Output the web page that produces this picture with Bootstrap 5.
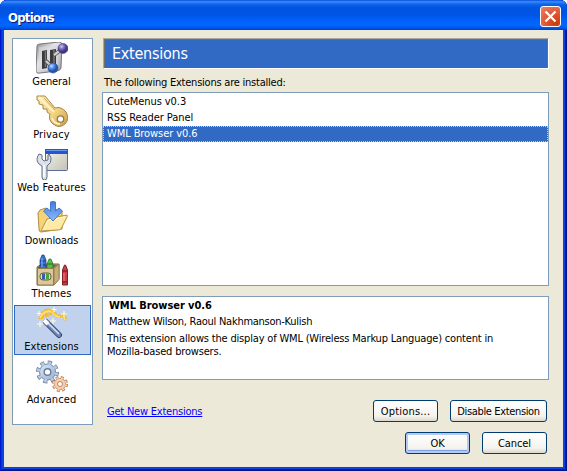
<!DOCTYPE html>
<html lang="en">
<head>
<meta charset="utf-8">
<meta name="viewport" content="width=device-width, initial-scale=1">
<title>Options</title>
<link href="https://cdn.jsdelivr.net/npm/bootstrap@5.3.0/dist/css/bootstrap.min.css" rel="stylesheet">
<style>
html, body { height: 471px; overflow: hidden; background: #fff; }
body { font-family: "DejaVu Sans Condensed", "DejaVu Sans", "Noto Sans", sans-serif; font-stretch: condensed; font-size: 11px; line-height: 13px; color: #000; letter-spacing: -.18px; }
.xp-window { width: 567px; height: 471px; border-radius: 7px 7px 0 0; padding: 0 4px 4px; background: #0a44e0; box-shadow: inset 1px 0 #0019cf, inset -1px 0 #00138c, inset 0 -1px #00138c, inset 2px 0 #0831d9, inset -2px 0 #001ea0, inset 0 -2px #001ea0; overflow: hidden; }
.xp-title { height: 30px; margin: 0 -4px; padding: 4px 6px 0 8px; background: linear-gradient(180deg, #0a4ddb 0, #3c8cf8 6%, #1068ec 13%, #0054e2 24%, #0055e6 50%, #0060fb 68%, #0067ff 84%, #005bf0 91%, #0040c8 100%); }
.xp-caption { color: #fff; font: bold 13px/17px "DejaVu Sans Condensed", "DejaVu Sans", sans-serif; font-stretch: condensed; letter-spacing: -.75px; text-shadow: 1px 1px #0a1883; margin-top: 5px; }
.xp-close { width: 21px; height: 21px; margin-top: 2px; border: 1px solid #fff; border-radius: 3px; background: radial-gradient(circle at 80% 85%, #cc3a0a 0, #e0512c 40%, #e9795f 90%); }
.xp-client { height: 437px; background: #ece9d8; padding: 8px 14px 0 8px; }
.xp-box { background: #fff; border: 1px solid #7f9db9; }
.xp-side { width: 81px; height: 387px; padding: 1px; }
.xp-item { height: 50px; margin-bottom: 3px; border: 1px solid transparent; padding: 1px 2px 0 0; white-space: nowrap; letter-spacing: -.1px; }
.xp-item svg { width: 32px; height: 32px; display: block; flex: none; margin-bottom: 1px; }
.xp-item.active { background: #c1d2ee; border-color: #316ac5; }
.ls-wide { letter-spacing: .1px; }
.xp-main { width: 447px; margin-left: 9px; }
.xp-head { width: 446px; height: 31px; margin-left: 1px; background: #316ac5; border: 1px solid; border-color: #aca899 #fff #fff #aca899; box-shadow: inset 1px 1px #716f64, inset -1px 0 #716f64; color: #fff; font-size: 16px; padding-left: 8px; letter-spacing: -.25px; }
.xp-label { margin: 7px 0 3px 2px; height: 13px; letter-spacing: -.23px; }
.xp-list { height: 194px; padding: 1px 0; letter-spacing: -.08px; }
.xp-row { height: 16px; line-height: 13px; padding-left: 3px; border: 1px dotted transparent; }
.xp-row.active { background: #316ac5; color: #fff; border-color: #f0c47a; }
.xp-desc { height: 84px; margin-top: 10px; padding: 2px 4px; }
.xp-desc b { letter-spacing: -.06px; }
.xp-indent { padding-left: 2px; }
.xp-author { margin: 3px 0 4px; letter-spacing: -.26px; }
.xp-link { color: #00f; margin-left: 5px; letter-spacing: -.22px; }
.xp-actions { gap: 12px; padding-right: 2px; }
.xp-dialog-actions { margin-top: 10px; }
.xp-btn { height: 22px; border: 1px solid #003c74; border-radius: 3px; background: linear-gradient(#fff, #f4f3ee 75%, #dcd8cc); color: #000; font-size: 11px; line-height: 13px; padding: 0; width: 65px; letter-spacing: -.1px; }
.xp-btn.wide { width: 97px; letter-spacing: -.35px; }
.xp-btn.spaced { letter-spacing: .2px; }
.xp-btn.default { box-shadow: inset 0 0 0 2px #b5caf3, inset 0 -1px 0 2px #7e9ee6; }
</style>
</head>
<body>
<svg width="0" height="0" class="position-absolute">
<defs>
<linearGradient id="steel" x2="1" y2="1"><stop stop-color="#8a8a8e"/><stop offset=".4" stop-color="#e6e6e9"/><stop offset="1" stop-color="#9a9a9e"/></linearGradient>
<linearGradient id="gold" x2="1" y2="1"><stop stop-color="#fff0b8"/><stop offset=".55" stop-color="#f3d584"/><stop offset="1" stop-color="#c99a42"/></linearGradient>
<radialGradient id="blueball" cx=".35" cy=".3"><stop stop-color="#c4dcff"/><stop offset=".5" stop-color="#5b91ea"/><stop offset="1" stop-color="#2355af"/></radialGradient>
<radialGradient id="violetball" cx=".35" cy=".3"><stop stop-color="#cdc5f5"/><stop offset=".5" stop-color="#7d70c0"/><stop offset="1" stop-color="#43377f"/></radialGradient>
<linearGradient id="arrow" x2="0" y2="1"><stop stop-color="#3f7ae0"/><stop offset="1" stop-color="#91bbfa"/></linearGradient>
<linearGradient id="gearblue" x2="1" y2="1"><stop stop-color="#dce8fa"/><stop offset="1" stop-color="#96afd4"/></linearGradient>
<linearGradient id="pane" x2="1" y2="1"><stop stop-color="#f4f3ee"/><stop offset="1" stop-color="#c2c1b4"/></linearGradient>
</defs>
</svg>
<div class="xp-window">
  <header class="xp-title d-flex justify-content-between align-items-start">
    <div class="xp-caption">Options</div>
    <div class="xp-close"><svg class="d-block" width="19" height="19" viewBox="0 0 19 19"><path d="M4.500 4.500l10 10M14.500 4.500l-10 10" stroke="#fff" stroke-width="2.300"/></svg></div>
  </header>
  <div class="xp-client">
    <div class="d-flex align-items-start">
      <nav class="xp-box xp-side">
        <div class="xp-item d-flex flex-column align-items-center">
          <svg viewBox="0 0 32 32"><path d="M1 4Q1 2 4 2L23 0Q26 0 26 3L25 26Q25 28 21 29L4 31Q0 32 0 28Z" fill="url(#steel)" stroke="#77777b"/><path d="M3 5L23 3L22 27L3 29Z" fill="#dadade" opacity=".65"/><path d="M6 9l5-1v18l-5 1zM14 8l6-1v18l-6 1z" fill="#3a3a3d"/><path d="M9.500 9v16M18 8v15" stroke="#77777b" stroke-width="1.500"/><path d="M10 19l7 7M18 13l8-6" stroke="#555" stroke-width="4"/><path d="M10 19l7 7M18 13l8-6" stroke="#ccc" stroke-width="2.200"/><circle cx="17" cy="26" r="5" fill="url(#blueball)" stroke="#244e9d" stroke-width=".6"/><circle cx="27" cy="6.500" r="5" fill="url(#violetball)" stroke="#44377c" stroke-width=".6"/></svg>
          <div>General</div>
        </div>
        <div class="xp-item d-flex flex-column align-items-center">
          <svg viewBox="0 0 32 32"><path d="M1 1L9 1L19 13Q25 11 30 17Q34 24 29 29Q23 34 17 29Q12 25 14 19L11 17V14L7 14V10L3 9L3 6L1 5Z" fill="url(#gold)" stroke="#a88447"/><path d="M3 2l15 15M16 23q2 6 8 6" fill="none" stroke="#fff6ce" stroke-width="1.600"/><path d="M8 3l11 12" stroke="#cda963"/><circle cx="24.500" cy="24" r="3.200" fill="#fff" stroke="#947a4f" stroke-width="1.300"/></svg>
          <div class="ls-wide">Privacy</div>
        </div>
        <div class="xp-item d-flex flex-column align-items-center">
          <svg viewBox="0 0 32 32"><rect x="9.500" y="1.500" width="22" height="21" rx="1" fill="url(#pane)" stroke="#5a6c98"/><path d="M9 1h23v5H9z" fill="#2456cf"/><path d="M10 2.500h21" stroke="#6c9af3"/><path d="M3 6Q-1 12 3 16L6 18V29Q6 32 8.500 32Q11 32 11 29V18Q16 15 15 10L13 6L12 7V12L8 13L6 11V7Z" fill="#dce1eb" stroke="#626c82"/><path d="M8 17v12" stroke="#fff" stroke-width="1.500"/></svg>
          <div class="ls-wide">Web Features</div>
        </div>
        <div class="xp-item d-flex flex-column align-items-center">
          <svg viewBox="0 0 32 32"><path d="M2 12l2-3 6-2 2 3 12-2 2 2v18L5 31Q3 31 3 28Z" fill="#f4d477" stroke="#b18d3c"/><path d="M5 30L11 18L31 14Q32 15 30 18L25 28Q24 29 21 29Z" fill="#ffeaa5" stroke="#b5923e"/><path d="M7 29l5-10 17-3" fill="none" stroke="#fff9d9"/><path d="M14.500 1Q17 0 19.500 1V10L23 7L26.500 10L17 20L7.500 10L11 7L14.500 10Z" fill="url(#arrow)" stroke="#4478cb"/></svg>
          <div>Downloads</div>
        </div>
        <div class="xp-item d-flex flex-column align-items-center">
          <svg viewBox="0 0 32 32"><path d="M1 13l5-3h17v15l-5 6H1z" fill="#b59d6c" stroke="#796642"/><path d="M2 13l5-2h14l-4 3H2z" fill="#756346"/><path d="M11 15v-5l2-5h2l2 5v4z" fill="#58bb42" stroke="#24722c" stroke-width=".7"/><path d="M11 10h6" stroke="#246f2c"/><path d="M4 15V6l2-5h2l2 5v9z" fill="#366fd2" stroke="#183f82" stroke-width=".7"/><path d="M4 7h6M4 11h6" stroke="#143d86"/><path d="M6 4v9" stroke="#8db6ff"/><path d="M1.500 14.500h16V31h-16z" fill="#dbc89a" stroke="#917b50"/><path d="M18 14.500l5-4v15L18 31z" fill="#c5ae7a" stroke="#917b50" stroke-width=".8"/><rect x="4" y="19" width="11" height="7" rx="3" fill="#e2d9b6" stroke="#6b5c38"/><path d="M6 19.500h3v6H6z" fill="#345eaa"/><path d="M10 19.500h3v6h-3z" fill="#4da340"/><path d="M26.500 31V16l2-5h1l2 5v15z" fill="#cf3a43" stroke="#841f28"/><path d="M27 17h4M27 28h4" stroke="#571b20" stroke-width="1.200"/><path d="M28 19v8" stroke="#f08085"/></svg>
          <div class="ls-wide">Themes</div>
        </div>
        <div class="xp-item active d-flex flex-column align-items-center">
          <svg viewBox="0 0 32 32"><path d="M4 12C5 4 13 1 17 5S21 10 25 9S31 9 28 13M5 11C8 6 14 10 15 5" fill="none" stroke="#f9b824" stroke-width="3.500" stroke-dasharray="4 .7"/><path d="M4 11C8 3 14 3 17 6S21 10 24 10M28 10l1 3" fill="none" stroke="#ffe267" stroke-width="1.700"/><path d="M10 15L23 28" stroke="#34466f" stroke-width="6" stroke-linecap="round"/><path d="M10 15L23 28" stroke="#7187b7" stroke-width="4" stroke-linecap="round"/><path d="M10 14L23 27" stroke="#d3def4" stroke-width="1.700"/><path d="M8 13l4 4" stroke="#fff" stroke-width="4"/><path d="M3 4v5M.5 6.500h5M18 0v5M15.500 2.500h5M28 4v6M25 7h6M17 11v6M14 14h6M4 14v6M1 17h6" stroke="#fffbd3" stroke-width="1.200"/></svg>
          <div class="ls-wide">Extensions</div>
        </div>
        <div class="xp-item d-flex flex-column align-items-center">
          <svg viewBox="0 0 32 32"><g fill="none"><circle cx="11.500" cy="12" r="9.500" stroke="#68788f" stroke-width="4" stroke-dasharray="4 3.460"/><circle cx="11.500" cy="12" r="8" fill="url(#gearblue)" stroke="#7488a5"/><circle cx="11.500" cy="12" r="9" stroke="#b7cae6" stroke-width="3.600" stroke-dasharray="2.700 4.369" stroke-dashoffset="-.5"/></g><circle cx="11.500" cy="12" r="3.300" fill="#fff" stroke="#697c99" stroke-width="1.400"/><circle cx="24" cy="24" r="6.500" fill="none" stroke="#b67c59" stroke-width="3" stroke-dasharray="2.800 2.305"/><circle cx="24" cy="24" r="5.700" fill="#f8cda9" stroke="#c99878"/><circle cx="24" cy="24" r="6.200" fill="none" stroke="#f8cda9" stroke-width="2" stroke-dasharray="1.800 3.070" stroke-dashoffset="-.5"/><circle cx="24" cy="24" r="2.500" fill="#fff" stroke="#bc8461"/></svg>
          <div class="ls-wide">Advanced</div>
        </div>
      </nav>
      <main class="xp-main">
        <div class="xp-head d-flex align-items-center">Extensions</div>
        <div class="xp-label">The following Extensions are installed:</div>
        <div class="xp-box xp-list">
          <div class="xp-row">CuteMenus v0.3</div>
          <div class="xp-row">RSS Reader Panel</div>
          <div class="xp-row active">WML Browser v0.6</div>
        </div>
        <div class="xp-box xp-desc">
          <div class="xp-indent"><b>WML Browser v0.6</b></div>
          <div class="xp-indent xp-author">Matthew Wilson, Raoul Nakhmanson-Kulish</div>
          <div>This extension allows the display of WML (Wireless Markup Language) content in<br>Mozilla-based browsers.</div>
        </div>
        <div class="xp-actions d-flex align-items-center mt-3 pt-1">
          <a class="xp-link me-auto" href="#">Get New Extensions</a>
          <button class="xp-btn spaced">Options...</button>
          <button class="xp-btn wide">Disable Extension</button>
        </div>
        <div class="xp-actions xp-dialog-actions d-flex justify-content-end">
          <button class="xp-btn default">OK</button>
          <button class="xp-btn">Cancel</button>
        </div>
      </main>
    </div>
  </div>
</div>
<script src="https://cdn.jsdelivr.net/npm/bootstrap@5.3.0/dist/js/bootstrap.bundle.min.js"></script>
</body>
</html>
